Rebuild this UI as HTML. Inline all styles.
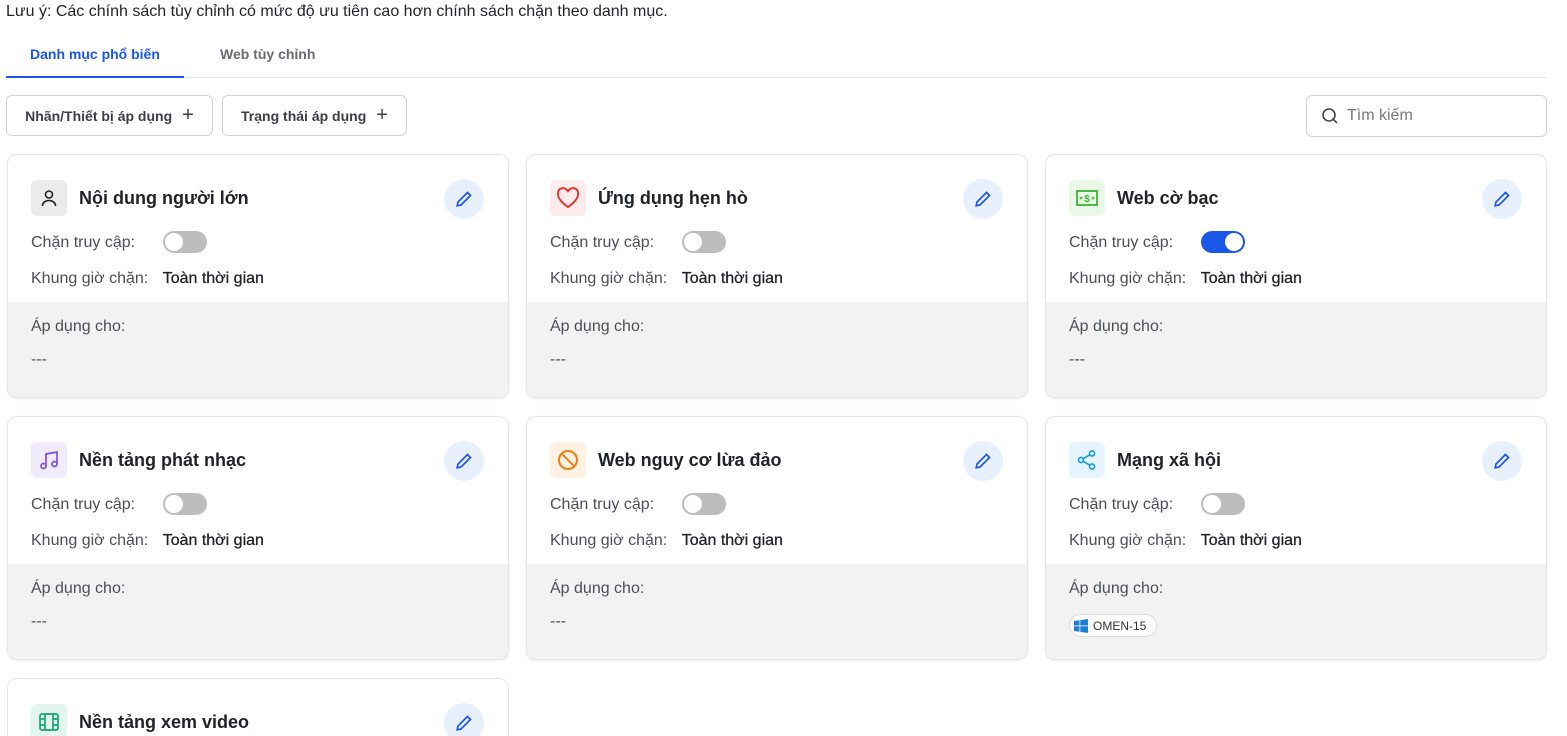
<!DOCTYPE html>
<html><head><meta charset="utf-8"><style>
*{box-sizing:border-box;margin:0;padding:0}
html,body{width:1567px;height:736px;overflow:hidden}
body{background:#fff;font-family:"Liberation Sans",sans-serif;color:#1f2329;position:relative}
.abs{position:absolute}
.note{left:6px;top:3px;font-size:16px;color:#1f2329}
.tab{top:46px;font-size:14px;font-weight:bold}
.line{left:6px;top:77px;width:1541px;height:1px;background:#e5e7eb}
.btn{top:95px;height:41px;border:1px solid #d0d3d8;border-radius:6px;font-size:14px;font-weight:bold;color:#3a3f47;display:flex;align-items:center;justify-content:center;gap:10px}
.search{position:absolute;left:1306px;top:95px;width:241px;height:42px;border:1px solid #d0d3d8;border-radius:6px;display:flex;align-items:center;padding-left:14px;gap:8px;font-size:16px;color:#777}
.card{position:absolute;width:502px;height:244px;border:1px solid #e3e5e8;border-radius:10px;overflow:hidden;box-shadow:0 1px 3px rgba(0,0,0,.08);background:#fff}
.ic{position:absolute;left:23px;top:25px;width:36px;height:36px;border-radius:6px;display:flex;align-items:center;justify-content:center}
.tt{position:absolute;left:71px;top:33px;font-size:18px;font-weight:bold;color:#1f2329}
.ed{position:absolute;left:436px;top:24px;width:40px;height:40px;border-radius:50%;background:#e8f0fe;display:flex;align-items:center;justify-content:center}
.r1{position:absolute;left:23px;top:79px;font-size:16px;color:#4a4f57}
.tg{position:absolute;left:155px;top:76px;width:44px;height:22px;border-radius:11px;background:#bdbdbd}
.tg::after{content:"";position:absolute;left:2px;top:2px;width:18px;height:18px;border-radius:50%;background:#fff}
.tg.on{background:#1a56e8}.tg.on::after{left:24px}
.r2{position:absolute;left:23px;top:115px;font-size:16px;color:#4a4f57}
.r2 b{color:#1f2329;font-weight:normal;margin-left:10px;-webkit-text-stroke:.3px #1f2329}
.gray{position:absolute;left:0;top:147px;width:100%;height:97px;background:#f2f2f2}
.g1{position:absolute;left:23px;top:16px;font-size:16px;color:#4a4f57}
.g2{position:absolute;left:23px;top:49px;font-size:16px;color:#4a4f57}
.chip{position:absolute;left:23px;top:50px;height:23px;padding:0 10px 0 4px;border:1px solid #dcdcdc;border-radius:12px;background:#fff;font-size:12px;display:flex;align-items:center;gap:5px;color:#333}
</style></head><body>
<div class="abs note">Lưu ý: Các chính sách tùy chỉnh có mức độ ưu tiên cao hơn chính sách chặn theo danh mục.</div>
<div class="abs tab" style="left:30px;color:#1a56e8">Danh mục phổ biến</div>
<div class="abs tab" style="left:220px;color:#676c74">Web tùy chỉnh</div>
<div class="abs line"></div>
<div class="abs" style="left:6px;top:76px;width:178px;height:2px;background:#1a56e8"></div>
<div class="abs btn" style="left:6px;width:207px">Nhãn/Thiết bị áp dụng <span style="font-size:20px;font-weight:normal">+</span></div>
<div class="abs btn" style="left:222px;width:185px">Trạng thái áp dụng <span style="font-size:20px;font-weight:normal">+</span></div>
<div class="search"><svg width="18" height="18" viewBox="0 0 18 18" fill="none" stroke="#444" stroke-width="1.6"><circle cx="8" cy="8" r="6"/><path d="M12.5 12.5L16 16"/></svg>Tìm kiếm</div>

<div class="card" style="left:7px;top:154px">
<div class="ic" style="background:#ebebeb"><svg width="20" height="20" viewBox="0 0 20 20" fill="none" stroke="#222" stroke-width="1.6"><circle cx="10" cy="6.5" r="3.5"/><path d="M3.5 18c0-3.5 3-5.5 6.5-5.5s6.5 2 6.5 5.5"/></svg></div>
<div class="tt">Nội dung người lớn</div>
<div class="ed"><svg width="20" height="20" viewBox="0 0 20 20" fill="none" stroke="#1a56e8" stroke-width="1.7"><path d="M13.5 3.5l3 3L7 16l-3.8.8.8-3.8z"/></svg></div>
<div class="r1">Chặn truy cập:</div><div class="tg"></div>
<div class="r2">Khung giờ chặn: <b>Toàn thời gian</b></div>
<div class="gray"><div class="g1">Áp dụng cho:</div><div class="g2">---</div></div>
</div>
<div class="card" style="left:526px;top:154px">
<div class="ic" style="background:#fdecec"><svg width="24" height="22" viewBox="0 0 24 22" fill="none" stroke="#e53935" stroke-width="2"><path d="M12 20S2 13.5 2 7.5A5 5 0 0 1 12 5a5 5 0 0 1 10 2.5C22 13.5 12 20 12 20z"/></svg></div>
<div class="tt">Ứng dụng hẹn hò</div>
<div class="ed"><svg width="20" height="20" viewBox="0 0 20 20" fill="none" stroke="#1a56e8" stroke-width="1.7"><path d="M13.5 3.5l3 3L7 16l-3.8.8.8-3.8z"/></svg></div>
<div class="r1">Chặn truy cập:</div><div class="tg"></div>
<div class="r2">Khung giờ chặn: <b>Toàn thời gian</b></div>
<div class="gray"><div class="g1">Áp dụng cho:</div><div class="g2">---</div></div>
</div>
<div class="card" style="left:1045px;top:154px">
<div class="ic" style="background:#eaf8e6"><svg width="22" height="16" viewBox="0 0 22 16" fill="none" stroke="#3bb532" stroke-width="1.8"><rect x="1" y="1" width="20" height="14"/><text x="11" y="12" font-size="10" fill="#3bb532" stroke="none" text-anchor="middle" font-family="Liberation Sans" font-weight="bold">$</text><circle cx="5" cy="8" r=".5"/><circle cx="17" cy="8" r=".5"/></svg></div>
<div class="tt">Web cờ bạc</div>
<div class="ed"><svg width="20" height="20" viewBox="0 0 20 20" fill="none" stroke="#1a56e8" stroke-width="1.7"><path d="M13.5 3.5l3 3L7 16l-3.8.8.8-3.8z"/></svg></div>
<div class="r1">Chặn truy cập:</div><div class="tg on"></div>
<div class="r2">Khung giờ chặn: <b>Toàn thời gian</b></div>
<div class="gray"><div class="g1">Áp dụng cho:</div><div class="g2">---</div></div>
</div>

<div class="card" style="left:7px;top:416px">
<div class="ic" style="background:#f0ecfc"><svg width="22" height="22" viewBox="0 0 22 22" fill="none" stroke="#7b4fe0" stroke-width="1.7"><path d="M8 17V5l11-2v12"/><circle cx="5.5" cy="17" r="2.5"/><circle cx="16.5" cy="15" r="2.5"/></svg></div>
<div class="tt">Nền tảng phát nhạc</div>
<div class="ed"><svg width="20" height="20" viewBox="0 0 20 20" fill="none" stroke="#1a56e8" stroke-width="1.7"><path d="M13.5 3.5l3 3L7 16l-3.8.8.8-3.8z"/></svg></div>
<div class="r1">Chặn truy cập:</div><div class="tg"></div>
<div class="r2">Khung giờ chặn: <b>Toàn thời gian</b></div>
<div class="gray"><div class="g1">Áp dụng cho:</div><div class="g2">---</div></div>
</div>
<div class="card" style="left:526px;top:416px">
<div class="ic" style="background:#fff2e3"><svg width="24" height="24" viewBox="0 0 24 24" fill="none" stroke="#f07c12" stroke-width="2"><circle cx="12" cy="12" r="9"/><path d="M5.6 5.6l12.8 12.8"/></svg></div>
<div class="tt">Web nguy cơ lừa đảo</div>
<div class="ed"><svg width="20" height="20" viewBox="0 0 20 20" fill="none" stroke="#1a56e8" stroke-width="1.7"><path d="M13.5 3.5l3 3L7 16l-3.8.8.8-3.8z"/></svg></div>
<div class="r1">Chặn truy cập:</div><div class="tg"></div>
<div class="r2">Khung giờ chặn: <b>Toàn thời gian</b></div>
<div class="gray"><div class="g1">Áp dụng cho:</div><div class="g2">---</div></div>
</div>
<div class="card" style="left:1045px;top:416px">
<div class="ic" style="background:#e6f5fd"><svg width="22" height="22" viewBox="0 0 22 22" fill="none" stroke="#1a9be0" stroke-width="1.7"><circle cx="16" cy="4.5" r="2.5"/><circle cx="5" cy="11" r="2.5"/><circle cx="16" cy="17.5" r="2.5"/><path d="M7.2 9.7l6.6-3.9M7.2 12.3l6.6 3.9"/></svg></div>
<div class="tt">Mạng xã hội</div>
<div class="ed"><svg width="20" height="20" viewBox="0 0 20 20" fill="none" stroke="#1a56e8" stroke-width="1.7"><path d="M13.5 3.5l3 3L7 16l-3.8.8.8-3.8z"/></svg></div>
<div class="r1">Chặn truy cập:</div><div class="tg"></div>
<div class="r2">Khung giờ chặn: <b>Toàn thời gian</b></div>
<div class="gray"><div class="g1">Áp dụng cho:</div><div class="chip"><svg width="14" height="14" viewBox="0 0 14 14" fill="#1e7fd9"><path d="M0 2l5.5-.8V6.5H0zM6.3 1.1L14 0v6.5H6.3zM0 7.3h5.5v5.5L0 12zM6.3 7.3H14V14l-7.7-1.1z"/></svg>OMEN-15</div></div>
</div>

<div class="card" style="left:7px;top:678px;height:58px;border-bottom:none;border-radius:10px 10px 0 0;box-shadow:none">
<div class="ic" style="background:#e3f6ee"><svg width="22" height="22" viewBox="0 0 22 22" fill="none" stroke="#17a673" stroke-width="1.7"><rect x="2" y="3" width="18" height="16" rx="2"/><path d="M7 3v16M15 3v16M2 8h5M2 14h5M15 8h5M15 14h5"/></svg></div>
<div class="tt">Nền tảng xem video</div>
<div class="ed"><svg width="20" height="20" viewBox="0 0 20 20" fill="none" stroke="#1a56e8" stroke-width="1.7"><path d="M13.5 3.5l3 3L7 16l-3.8.8.8-3.8z"/></svg></div>
</div>
</body></html>
